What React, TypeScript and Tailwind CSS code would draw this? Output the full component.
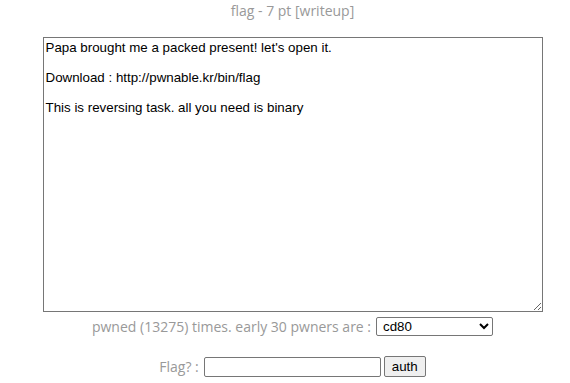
export default function App() {
  const desc =
    "Papa brought me a packed present! let's open it.\n\nDownload : http://pwnable.kr/bin/flag\n\nThis is reversing task. all you need is binary";
  return (
    <div className="w-[570px] h-[383px] bg-white pl-[15px] text-center font-['Open_Sans',sans-serif] text-[14px] text-[#999999]">
      <div className="pt-[1px] h-[37px] leading-[20px]">
        flag - 7 pt [writeup]
      </div>
      <div className="flex justify-center">
        <textarea
          readOnly
          defaultValue={desc}
          className="block w-[500px] h-[275px] border border-[#767676] px-[2px] py-[2px] text-left font-['Liberation_Sans',Arial,sans-serif] text-[13.33px] leading-[15px] text-black bg-white outline-none"
        />
      </div>
      <div className="mt-[5px] flex justify-center items-center gap-[5px] h-[19px]">
        <span className="leading-[19px]">pwned (13275) times. early 30 pwners are :</span>
        <select className="w-[117px] h-[19px] border border-[#767676] rounded-[2px] bg-white text-black font-['Liberation_Sans',Arial,sans-serif] text-[13.33px] pl-[2px]">
          <option>cd80</option>
        </select>
      </div>
      <div className="mt-[20px] flex justify-center items-center h-[21px]">
        <span className="leading-[19px] mr-[5px]">Flag? :</span>
        <input
          type="text"
          className="w-[177px] h-[20px] border border-[#767676] rounded-[2px] bg-white"
        />
        <button className="ml-[3px] h-[21px] w-[42px] border border-[#767676] rounded-[2px] bg-[#efefef] text-black font-['Liberation_Sans',Arial,sans-serif] text-[13.33px] leading-[15px]">
          auth
        </button>
      </div>
    </div>
  );
}
